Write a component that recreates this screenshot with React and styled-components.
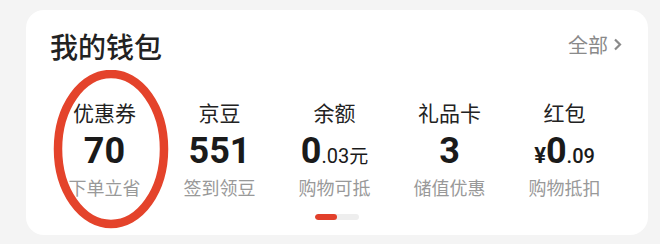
import React from "react";
import styled, { createGlobalStyle } from "styled-components";

const Global = createGlobalStyle`
  body {
    margin: 0;
    background: #f4f4f4;
    font-family: "Noto Sans CJK SC", "Noto Sans", sans-serif;
  }
`;

const Page = styled.div`
  width: 660px;
  height: 244px;
  padding: 10px 12px 0 26px;
  box-sizing: border-box;
`;

const Card = styled.div`
  position: relative;
  width: 622px;
  height: 225px;
  background: #fff;
  border-radius: 18px;
  box-sizing: border-box;
  padding: 16px 26px 0 21px;
`;

const Header = styled.div`
  display: flex;
  justify-content: space-between;
  align-items: center;
  padding-left: 3px;
  height: 40px;
`;

const Title = styled.h1`
  margin: 0;
  font-size: 28px;
  font-weight: 500;
  color: #222;
  line-height: 40px;
`;

const More = styled.div`
  display: flex;
  align-items: center;
  gap: 5px;
  font-size: 20px;
  color: #8a8a8a;
  margin-top: -4px;
`;

const Grid = styled.div`
  display: grid;
  grid-template-columns: repeat(5, 115px);
  margin-top: 34px;
`;

const Item = styled.div`
  display: flex;
  flex-direction: column;
  align-items: center;
`;

const Label = styled.div`
  font-size: 21px;
  line-height: 24px;
  color: #222;
`;

const Value = styled.div`
  display: flex;
  align-items: baseline;
  font-family: Roboto, "Noto Sans", sans-serif;
  font-weight: 700;
  color: #1a1a1a;
  height: 42px;
  margin-top: 6px;
`;

const Big = styled.span`
  font-size: 36px;
  line-height: 42px;
`;

const Small = styled.span`
  font-size: ${(p) => p.$size || 20}px;
  font-weight: ${(p) => p.$weight || 500};
  font-family: ${(p) => (p.$cjk ? '"Noto Sans CJK SC", sans-serif' : "inherit")};
`;

const Sub = styled.div`
  font-size: 18px;
  line-height: 22px;
  color: #999;
  margin-top: 4px;
`;

const Dots = styled.div`
  display: flex;
  justify-content: center;
  margin-top: 16px;
  padding-left: 4px;
`;

const Track = styled.div`
  width: 44px;
  height: 6px;
  border-radius: 3px;
  background: #eeeeee;
  overflow: hidden;
`;

const Thumb = styled.div`
  width: 22px;
  height: 6px;
  border-radius: 3px;
  background: #e2402b;
`;

const Ring = styled.svg`
  position: absolute;
  left: 27px;
  top: 60px;
  pointer-events: none;
`;

const items = [
  { label: "优惠券", value: <Big>70</Big>, sub: "下单立省" },
  { label: "京豆", value: <Big>551</Big>, sub: "签到领豆" },
  {
    label: "余额",
    value: (
      <>
        <Big>0</Big>
        <Small $weight={400}>.03</Small>
        <Small $cjk $weight={400} $size={19}>元</Small>
      </>
    ),
    sub: "购物可抵",
  },
  { label: "礼品卡", value: <Big>3</Big>, sub: "储值优惠" },
  {
    label: "红包",
    value: (
      <>
        <Small $size={22} $weight={700}>¥</Small>
        <Big>0</Big>
        <Small>.09</Small>
      </>
    ),
    sub: "购物抵扣",
  },
];

export default function App() {
  return (
    <>
      <Global />
      <Page>
        <Card>
          <Header>
            <Title>我的钱包</Title>
            <More>
              全部
              <svg width="9" height="15" viewBox="0 0 9 15">
                <path d="M2 2.5l5 5-5 5" fill="none" stroke="#8a8a8a" strokeWidth="2.2" />
              </svg>
            </More>
          </Header>
          <Grid>
            {items.map((it) => (
              <Item key={it.label}>
                <Label>{it.label}</Label>
                <Value>{it.value}</Value>
                <Sub>{it.sub}</Sub>
              </Item>
            ))}
          </Grid>
          <Dots>
            <Track>
              <Thumb />
            </Track>
          </Dots>
          <Ring width="116" height="160" viewBox="0 0 116 160">
            <ellipse cx="58" cy="79" rx="53" ry="75" fill="none" stroke="#e4432b" strokeWidth="8.5" />
          </Ring>
        </Card>
      </Page>
    </>
  );
}
